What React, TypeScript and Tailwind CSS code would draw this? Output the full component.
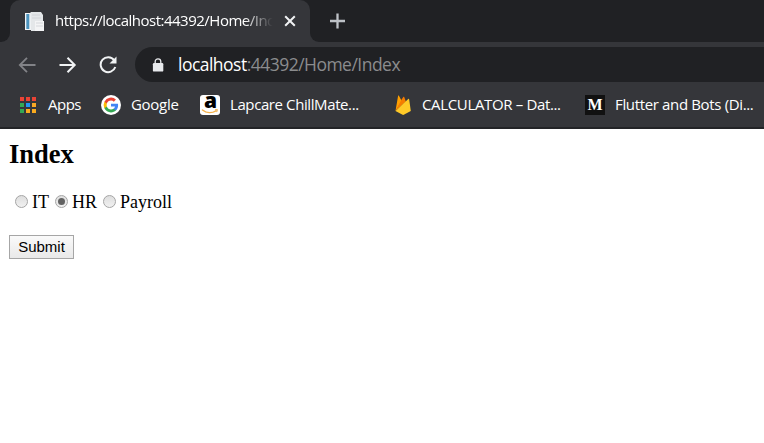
import type { ReactNode } from "react";

const appColors = ["#ea4335", "#ea4335", "#ea4335", "#34a853", "#2196f3", "#f9a825", "#34a853", "#fbab1e", "#fbab1e"];

function DocIcon() {
  return (
    <svg width="21" height="21" viewBox="0 0 21 21" className="shrink-0">
      <path d="M1 2h13v17H1z" fill="#f1f4f6" />
      <path d="M2.3 3h3v15h-3z" fill="#4c93bd" />
      <path d="M6.5 1H17l2 3v16H7z" fill="#e4e7e9" />
      <path d="M11 10h9v10h-9z" fill="#f3f4f5" />
      <path d="M8 4h8M8 7h9M12 12h7M12 15h7" stroke="#cdd1d4" strokeWidth=".8" />
    </svg>
  );
}

function GoogleIcon() {
  return (
    <svg width="20" height="20" viewBox="0 0 20 20" className="shrink-0">
      <circle cx="10" cy="10" r="10" fill="#fff" />
      <g transform="translate(2.6 2.6) scale(.617)">
        <path fill="#4285F4" d="M23.5 12.3c0-.9-.1-1.6-.2-2.3H12v4.5h6.5c-.3 1.5-1.1 2.7-2.4 3.6v3h3.9c2.2-2.1 3.5-5.1 3.5-8.8z" />
        <path fill="#34A853" d="M12 24c3.2 0 5.9-1.1 8-2.9l-3.9-3c-1.1.7-2.4 1.1-4.1 1.1-3.1 0-5.8-2.1-6.7-4.9h-4v3.1C3.3 21.3 7.3 24 12 24z" />
        <path fill="#FBBC05" d="M5.3 14.3a7 7 0 0 1 0-4.6V6.6h-4a12 12 0 0 0 0 10.8z" />
        <path fill="#EA4335" d="M12 4.8c1.8 0 3.3.6 4.6 1.8L20 3.1A12 12 0 0 0 1.3 6.6l4 3.1C6.2 6.9 8.9 4.8 12 4.8z" />
      </g>
    </svg>
  );
}

function AmazonIcon() {
  return (
    <div className="relative h-5 w-5 shrink-0 rounded-[3px] bg-white">
      <span className="absolute top-[-5px] left-[4px] font-['Open_Sans',sans-serif] text-[21px] leading-[20px] font-extrabold tracking-normal text-black">a</span>
      <svg width="20" height="20" viewBox="0 0 20 20" className="absolute inset-0">
        <path d="M2.5 15c4 3.2 9.5 3.2 13.5.8" fill="none" stroke="#f3b04a" strokeWidth="1.5" strokeLinecap="round" />
        <path d="M15 14.8l2.4-.2-.7 2.5" fill="none" stroke="#f3b04a" strokeWidth="1" />
      </svg>
    </div>
  );
}

function FirebaseIcon() {
  return (
    <svg width="16" height="20" viewBox="0 0 16 20" className="ml-[1px] shrink-0">
      <path d="M.5 16L3.1.8c.1-.5.6-.5.8-.1l2.8 5.2z" fill="#ffa000" />
      <path d="M.5 16L6.4 4.8 8.3 2c.3-.5.7-.4.9 0l1.7 4.5z" fill="#f57c00" />
      <path d="M.5 16l12.7-12c.4-.4.9-.2 1 .4L15.8 16l-6.6 3.6c-.7.4-1.4.4-2.1 0z" fill="#ffca28" />
    </svg>
  );
}

function Bookmark({ icon, className, children }: { icon: ReactNode; className: string; children: ReactNode }) {
  return (
    <div className={`flex shrink-0 items-center gap-[10px] ${className}`}>
      {icon}
      <span className="pb-[2px] whitespace-nowrap">{children}</span>
    </div>
  );
}

function Radio({ checked = false }: { checked?: boolean }) {
  return (
    <span className="mb-[1px] flex h-[13px] w-[13px] shrink-0 items-center justify-center rounded-full border border-[#a5a5a5] bg-linear-to-b from-[#dedede] to-[#f1f1f1]">
      {checked && <span className="h-[7px] w-[7px] rounded-full bg-[#626262]" />}
    </span>
  );
}

export default function App() {
  return (
    <div className="flex h-[443px] w-[764px] flex-col overflow-hidden bg-white">
      <header className="flex h-[129px] shrink-0 flex-col border-b-2 border-[#232427] bg-[#35363a] font-['Open_Sans',sans-serif] text-white">
        <div className="flex h-[42px] shrink-0 bg-[#202124]">
          <div className="flex w-[10px] bg-[#35363a]"><div className="w-full rounded-br-[9px] bg-[#202124]" /></div>
          <div className="flex w-[300px] items-center rounded-t-[10px] bg-[#35363a] pl-[14px]">
            <DocIcon />
            <span className="ml-[10px] w-[220px] overflow-hidden mask-r-from-86% mask-r-to-99% pb-[2px] text-[15px] leading-5 tracking-[-0.5px] whitespace-nowrap">https://localhost:44392/Home/Index</span>
            <svg width="12" height="12" viewBox="0 0 12 12" className="ml-[9px] shrink-0" stroke="#f1f3f4" strokeWidth="2"><path d="M1.2 1.2l9.6 9.6M10.8 1.2L1.2 10.8" /></svg>
          </div>
          <div className="flex w-[10px] bg-[#35363a]"><div className="w-full rounded-bl-[9px] bg-[#202124]" /></div>
          <svg width="16" height="16" viewBox="0 0 16 16" className="mt-[13px] ml-[10px]" stroke="#bdc1c6" strokeWidth="2.3"><path d="M7.5 .5v15M0 8h15" /></svg>
        </div>
        <nav className="mt-[5px] flex h-[35px] shrink-0 items-center">
          <svg width="18" height="18" viewBox="0 0 18 18" className="ml-[18px]" fill="none" stroke="#828387" strokeWidth="1.8"><path d="M17.5 9H2M9 1.8L1.8 9 9 16.2" /></svg>
          <svg width="18" height="18" viewBox="0 0 18 18" className="ml-[23px]" fill="none" stroke="#f1f3f4" strokeWidth="2"><path d="M.5 9H15.5M8.5 1.8L15.7 9l-7.2 7.2" /></svg>
          <svg width="18" height="18" viewBox="0 0 18 18" className="ml-[22px]" fill="none" stroke="#f1f3f4" strokeWidth="2"><path d="M15.2 4.2A7.5 7.5 0 1 0 16.3 11" /><path d="M17.5.5v7h-7z" fill="#f1f3f4" stroke="none" /></svg>
          <div className="ml-[18px] flex h-[35px] flex-1 items-center rounded-l-full bg-[#202124]">
            <svg width="12" height="14" viewBox="0 0 12 14" className="ml-[17px] shrink-0"><path d="M3.2 6V3.6a2.8 2.8 0 0 1 5.6 0V6" fill="none" stroke="#e8eaed" strokeWidth="1.3" /><rect x=".9" y="5" width="10.4" height="8.6" rx="1.2" fill="#e8eaed" /></svg>
            <span className="ml-[14px] text-[17.5px] tracking-[-0.52px] whitespace-nowrap text-[#8b8c8e]"><span className="text-white">localhost</span>:44392/Home/Index</span>
          </div>
        </nav>
        <nav className="flex h-[45px] shrink-0 items-center pl-[20px] text-[15px] leading-5">
          <Bookmark className="w-[81px] tracking-[-0.5px]" icon={<div className="mr-[2px] grid shrink-0 grid-cols-3 gap-[2px]">{appColors.map((c, i) => <i key={i} className="h-[4px] w-[4px]" style={{ background: c }} />)}</div>}>Apps</Bookmark>
          <Bookmark className="w-[99px] tracking-[-0.3px]" icon={<GoogleIcon />}>Google</Bookmark>
          <Bookmark className="w-[194px] tracking-[-0.4px]" icon={<AmazonIcon />}>Lapcare ChillMate...</Bookmark>
          <Bookmark className="w-[191px] tracking-[-0.35px]" icon={<div className="mr-[1px]"><FirebaseIcon /></div>}>CALCULATOR – Dat...</Bookmark>
          <Bookmark className="tracking-[-0.35px]" icon={<div className="flex h-5 w-5 items-center justify-center bg-[#111] font-['Liberation_Serif',serif] text-[16px] font-bold tracking-normal">M</div>}>Flutter and Bots (Di...</Bookmark>
        </nav>
      </header>
      <main className="flex flex-col items-start pl-[9px] font-['Liberation_Serif',serif] text-black">
        <h2 className="mt-[9px] text-[26.5px] leading-[32px] font-bold">Index</h2>
        <div className="mt-[21px] flex h-[22px] items-center pl-[6px] text-[18px]">
          <Radio /><span className="mr-[6px] ml-1">IT</span>
          <Radio checked /><span className="mr-[6px] ml-1">HR</span>
          <Radio /><span className="ml-1">Payroll</span>
        </div>
        <button className="mt-[22px] flex h-[24px] w-[65px] items-center justify-center border border-[#a6a6a6] bg-linear-to-b from-[#fafafa] to-[#e9e9e9] font-['Liberation_Sans',sans-serif] text-[15px]">Submit</button>
      </main>
    </div>
  );
}
